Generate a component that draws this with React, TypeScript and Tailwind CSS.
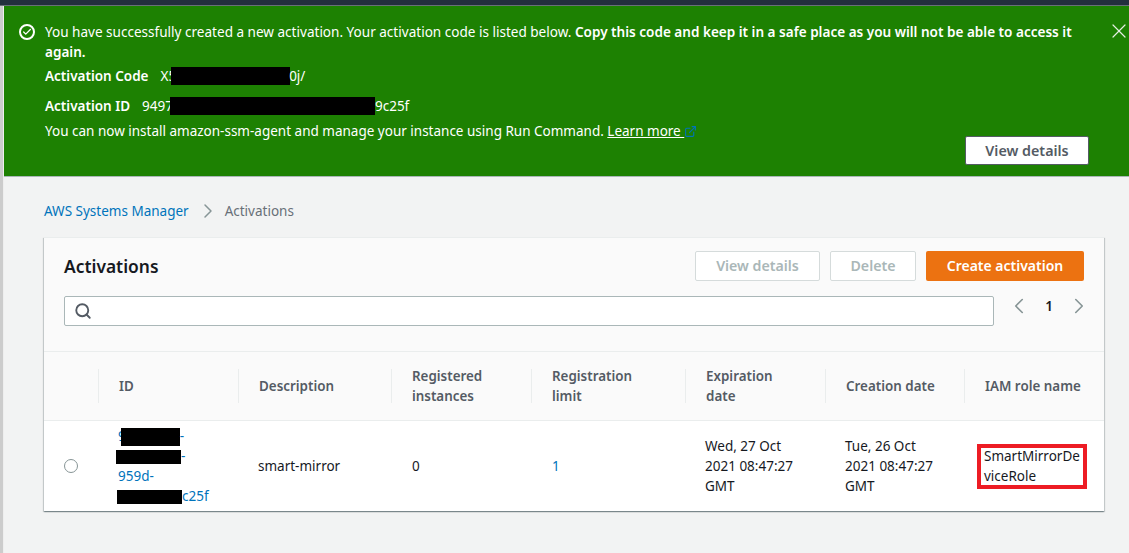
import { Check, ChevronLeft, ChevronRight, ExternalLink, Search, X } from "lucide-react";

const Redact = ({ className }: { className: string }) => (
  <span className={`inline-block bg-black align-middle ${className}`}></span>
);

const headers = [
  "",
  "ID",
  "Description",
  "Registered\ninstances",
  "Registration\nlimit",
  "Expiration\ndate",
  "Creation date",
  "IAM role name",
];

const gridCols = "grid grid-cols-[54px_140px_153px_140px_154px_140px_139px_140px]";

export default function App() {
  return (
    <div className="flex h-[553px] w-[1129px] flex-col overflow-hidden bg-[#f2f3f3] font-['Noto_Sans',sans-serif] text-[13.5px] leading-5 text-[#16191f]">
      {/* Top bar */}
      <div className="h-[5px] shrink-0 bg-[#232f3e]"></div>
      <div className="h-px shrink-0 bg-[#687078]"></div>

      <div className="flex flex-1">
        <div className="w-[4px] shrink-0 self-stretch border-r border-[#eeeeee] bg-[#cccccc]"></div>
        <div className="min-w-0 flex-1">
          {/* Success banner */}
          <div className="relative h-[171px] border-b border-[#aab7b8] bg-[#1d8102] pl-[41px] pr-[40px] pt-4 text-white">
            <div className="absolute left-[15px] top-[18px] flex h-4 w-4 items-center justify-center rounded-full border-2 border-white">
              <Check size={10} strokeWidth={3} />
            </div>
            <X size={24} strokeWidth={1.2} className="absolute -right-[2px] top-[13px] text-[#e5eee2]" />
            <p className="w-[1040px] text-[13.55px]">
              You have successfully created a new activation. Your activation code is listed below.{" "}
              <b className="font-semibold">Copy this code and keep it in a safe place as you will not be able to access it again.</b>
            </p>
            <div className="mt-[4px] flex h-5 items-center">
              <b className="font-semibold">Activation Code</b>
              <span className="ml-[12px]">X5</span>
              <Redact className="-ml-[5px] h-[18px] w-[119px]" />
              <span className="-ml-[1px]">0j/</span>
            </div>
            <div className="mt-[10px] flex h-5 items-center">
              <b className="font-semibold">Activation ID</b>
              <span className="ml-[12px]">9497</span>
              <Redact className="-ml-[3px] h-[18px] w-[205px]" />
              <span>9c25f</span>
            </div>
            <p className="mt-[5px] flex items-center">
              You can now install amazon-ssm-agent and manage your instance using Run Command.&nbsp;
              <a className="underline">Learn more&nbsp;</a>
              <ExternalLink size={13} className="text-[#0073bb]" />
            </p>
            <button className="absolute right-[40px] top-[130px] h-[29px] w-[124px] rounded-[2px] border border-[#545b64] bg-white text-[14.3px] font-semibold text-[#545b64]">
              View details
            </button>
          </div>

          {/* Breadcrumb */}
          <div className="flex h-[60px] items-center pl-[40px] pt-[7px]">
            <a className="text-[#0073bb]">AWS Systems Manager</a>
            <ChevronRight size={24} strokeWidth={1.5} className="ml-[7px] text-[#879596]" />
            <span className="ml-[5px] text-[#687078]">Activations</span>
          </div>

          {/* Card */}
          <div className="ml-[40px] w-[1060px] border-t border-[#eaeded] bg-[#fafafa] shadow-[0_1px_1px_0_rgba(0,28,36,0.3),1px_1px_1px_0_rgba(0,28,36,0.15),-1px_1px_1px_0_rgba(0,28,36,0.15)]">
            <div className="h-[113px] px-5 pt-[13px]">
              <div className="flex h-[30px] items-center">
                <h2 className="flex-1 pb-[1px] text-[17.4px] font-semibold text-[#16191f]">Activations</h2>
                <button className="h-[30px] w-[125px] rounded-[2px] border border-[#d5dbdb] bg-white text-[14.2px] font-semibold text-[#aab7b8]">View details</button>
                <button className="ml-[10px] h-[30px] w-[86px] rounded-[2px] border border-[#d5dbdb] bg-white text-[14.2px] font-semibold text-[#aab7b8]">Delete</button>
                <button className="ml-[10px] h-[30px] w-[158px] rounded-[2px] bg-[#ec7211] text-sm font-semibold text-white">Create activation</button>
              </div>
              <div className="mt-[15px] flex h-[30px] items-center">
                <div className="flex h-[30px] w-[930px] shrink-0 items-center rounded-[2px] border border-[#aab7b8] bg-white pl-[9px]">
                  <Search size={18} strokeWidth={2.5} className="text-[#545b64]" />
                </div>
                <div className="mb-[10px] ml-[12px] flex items-center">
                  <ChevronLeft size={26} strokeWidth={1.5} className="text-[#879596]" />
                  <span className="ml-[11px] w-[12px] text-center font-semibold">1</span>
                  <ChevronRight size={26} strokeWidth={1.5} className="ml-[11px] text-[#879596]" />
                </div>
              </div>
            </div>

            {/* Table header */}
            <div className={`${gridCols} h-[70px] border-y border-[#eaeded]`}>
              {headers.map((label, i) => (
                <div key={i} className="flex items-center py-[17px]">
                  <div className={`flex h-[34px] w-full items-center whitespace-pre-line pl-5 text-[13.4px] font-semibold text-[#545b64] ${i > 0 ? "border-l border-[#eaeded]" : ""}`}>
                    {label}
                  </div>
                </div>
              ))}
            </div>

            {/* Table row */}
            <div className={`${gridCols} h-[90px] items-center bg-white text-[#16191f]`}>
              <div className="pl-5">
                <div className="h-[14px] w-[14px] rounded-full border border-[#879596] bg-white"></div>
              </div>
              <div className="pl-[20px] text-[#0073bb]">
                <div className="h-5">9<Redact className="-ml-[5px] h-[18px] w-[59px]" />-</div>
                <div className="h-5"><Redact className="-ml-[2px] h-[14px] w-[65px]" />-</div>
                <div className="h-5">959d-</div>
                <div className="h-5"><Redact className="-ml-[1px] h-[14px] w-[65px]" />c25f</div>
              </div>
              <div className="pl-[20px]">smart-mirror</div>
              <div className="pl-[21px]">0</div>
              <div className="pl-[21px] text-[#0073bb]">1</div>
              <div className="whitespace-pre-line pl-[20px]">{"Wed, 27 Oct\n2021 08:47:27\nGMT"}</div>
              <div className="whitespace-pre-line pl-[20px]">{"Tue, 26 Oct\n2021 08:47:27\nGMT"}</div>
              <div className="pl-[13px]">
                <div className="flex h-[45px] w-[110px] items-center border-4 border-[#ed1c24] pl-[3px]">
                  <div className="w-[99px] break-all">SmartMirrorDeviceRole</div>
                </div>
              </div>
            </div>
          </div>
        </div>
      </div>
    </div>
  );
}
